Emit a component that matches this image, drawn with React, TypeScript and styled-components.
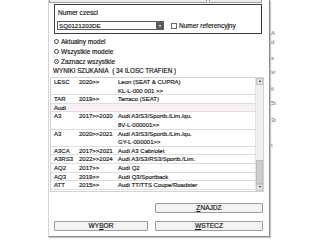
import styled, { createGlobalStyle } from 'styled-components'

const GlobalStyle = createGlobalStyle`
  html, body {
    margin: 0;
    padding: 0;
    background: #ffffff;
  }
  body {
    font-family: "Liberation Sans", Arial, sans-serif;
    color: #111111;
    -webkit-text-stroke: 0.15px #111111;
  }
`

const Page = styled.div`
  display: flex;
  align-items: flex-start;
  width: 320px;
  height: 240px;
  overflow: hidden;
  padding-left: 48px;
  box-sizing: border-box;
`

const Dialog = styled.div`
  display: flex;
  flex-direction: column;
  width: 222px;
  height: 237px;
  box-sizing: border-box;
  background: #ffffff;
  border-left: 1px solid #d4d4d4;
  border-right: 1px solid #8c8c8c;
  border-bottom: 1px solid #8c8c8c;
  box-shadow: 1px 1px 1px rgba(0, 0, 0, 0.22);
`

const TopFields = styled.div`
  display: flex;
  gap: 2px;
  height: 3px;
`

const FieldStub = styled.div<{ $w: number }>`
  width: ${(p) => p.$w}px;
  box-sizing: border-box;
  background: #ededed;
  border: 1px solid #a0a0a0;
  border-top: 0;
`

const GroupBox = styled.div`
  margin: 1px 0 0 5px;
  width: 208px;
  height: 30px;
  box-sizing: border-box;
  border: 1px solid #3c3c3c;
  padding: 4px 2px 0 2px;
`

const FieldLabel = styled.div`
  font-size: 6.6px;
  line-height: 8px;
  height: 8px;
  padding-left: 1px;
`

const FieldRow = styled.div`
  display: flex;
  align-items: center;
  margin-top: 4px;
  height: 9px;
`

const Combo = styled.div`
  display: flex;
  width: 107px;
  height: 9px;
  box-sizing: border-box;
  border: 1px solid #5a5a5a;
`

const ComboText = styled.div`
  flex: 1;
  font-size: 6.2px;
  line-height: 7px;
  padding-left: 1px;
`

const ComboArrow = styled.div`
  width: 7px;
  background: #5e5e5e;
  display: flex;
  align-items: center;
  justify-content: center;

  &::after {
    content: '';
    border-left: 1.5px solid transparent;
    border-right: 1.5px solid transparent;
    border-top: 2px solid #ffffff;
  }
`

const CheckBox = styled.div`
  width: 6px;
  height: 6px;
  box-sizing: border-box;
  border: 1px solid #6a6a6a;
  margin-left: 7px;
`

const CheckLabel = styled.span`
  font-size: 6.5px;
  margin-left: 2px;
`

const RadioList = styled.div`
  display: flex;
  flex-direction: column;
  margin: 3px 0 0 5px;
`

const RadioRow = styled.div`
  display: flex;
  align-items: center;
  height: 9.8px;
  font-size: 6.5px;
`

const RadioDot = styled.span<{ $checked?: boolean }>`
  display: flex;
  align-items: center;
  justify-content: center;
  width: 5px;
  height: 5px;
  box-sizing: border-box;
  border: 1px solid #444444;
  border-radius: 50%;
  margin-right: 2px;

  &::after {
    content: '';
    width: 1.6px;
    height: 1.6px;
    border-radius: 50%;
    background: ${(p) => (p.$checked ? '#222222' : 'transparent')};
  }
`

const ResultsTitle = styled.div`
  margin: 1px 0 0 4px;
  font-size: 6.3px;
  line-height: 8.6px;
`

const ResultsBox = styled.div`
  display: flex;
  margin: 1px 0 0 1px;
  width: 214px;
  height: 115px;
  box-sizing: border-box;
  border: 1px solid #d2d2d2;
  overflow: hidden;
`

const Rows = styled.div`
  flex: 1;
  display: flex;
  flex-direction: column;
`

const Row = styled.div<{ $group?: boolean }>`
  display: grid;
  grid-template-columns: 25px 39px 1fr;
  padding-left: 3px;
  font-size: 6px;
  line-height: 8.6px;
  background: ${(p) => (p.$group ? '#f8f0f5' : 'transparent')};
  box-shadow: inset 0 -1px 0 #dedede;
  flex-shrink: 0;
`

const Cell = styled.div`
  white-space: nowrap;
`

const Scrollbar = styled.div`
  display: flex;
  flex-direction: column;
  width: 7px;
  background: #efefef;
  border-left: 1px solid #e2e2e2;
`

const ScrollArrow = styled.div<{ $down?: boolean }>`
  height: 7px;
  display: flex;
  align-items: center;
  justify-content: center;
  background: #e4e4e4;
  border: 1px solid #c4c4c4;
  box-sizing: border-box;

  &::after {
    content: '';
    border-left: 1.5px solid transparent;
    border-right: 1.5px solid transparent;
    ${(p) => (p.$down ? 'border-top: 2px solid #222;' : 'border-bottom: 2px solid #222;')}
  }
`

const ScrollTrack = styled.div`
  flex: 1;
`

const ScrollThumb = styled.div`
  height: 24px;
  background: #cdcdcd;
  border: 1px solid #bdbdbd;
  box-sizing: border-box;
`

const Buttons = styled.div`
  display: grid;
  grid-template-columns: 94px 108px;
  grid-template-rows: 10px 10px;
  column-gap: 7px;
  row-gap: 8px;
  margin: 11px 0 0 5px;
`

const DlgButton = styled.div<{ $col: number }>`
  grid-column: ${(p) => p.$col};
  display: flex;
  align-items: center;
  justify-content: center;
  background: #f3f3f3;
  border: 1px solid #9c9c9c;
  border-radius: 1px;
  font-size: 6.6px;

  u {
    text-decoration-thickness: 0.6px;
    text-underline-offset: 0.8px;
  }
`

const BehindWindow = styled.div`
  display: flex;
  flex-direction: column;
  width: 5px;
  margin-left: 1px;
  overflow: hidden;
`

const Fragment = styled.div<{ $gap: number }>`
  margin-top: ${(p) => p.$gap}px;
  font-size: 6px;
  line-height: 6px;
  white-space: nowrap;
  color: #555555;
  -webkit-text-stroke: 0;
  -webkit-font-smoothing: antialiased;
  opacity: 0.85;
`

type ResultRow = { code?: string; years?: string; lines: string[]; group?: boolean }

const results: ResultRow[] = [
  { code: 'LESC', years: '2020>>', lines: ['Leon (SEAT & CUPRA)', 'KL-L-000 001 >>'] },
  { code: 'TAR', years: '2019>>', lines: ['Tarraco (SEAT)'] },
  { group: true, lines: [] },
  { code: 'A3', years: '2017>>2020', lines: ['Audi A3/S3/Sportb./Lim./qu.', '8V-L-000001>>'] },
  { code: 'A3', years: '2020>>2021', lines: ['Audi A3/S3/Sportb./Lim./qu.', 'GY-L-000001>>'] },
  { code: 'A3CA', years: '2017>>2021', lines: ['Audi A3 Cabriolet'] },
  { code: 'A3RS3', years: '2022>>2024', lines: ['Audi A3/S3/RS3/Sportb./Lim.'] },
  { code: 'AQ2', years: '2017>>', lines: ['Audi Q2'] },
  { code: 'AQ3', years: '2019>>', lines: ['Audi Q3/Sportback'] },
  { code: 'ATT', years: '2015>>', lines: ['Audi TT/TTS Coupe/Roadster'] },
]

const fragments = [
  { gap: 30, text: 'A' },
  { gap: 3, text: 'd' },
  { gap: 10, text: 's' },
  { gap: 8, text: 'si' },
  { gap: 11, text: 'fi' },
  { gap: 8, text: '5t' },
  { gap: 11, text: '3t' },
  { gap: 19, text: 't' },
]

function App() {
  return (
    <>
      <GlobalStyle />
      <Page>
        <Dialog>
          <TopFields>
            <FieldStub $w={158} />
            <FieldStub $w={53} />
          </TopFields>

          <GroupBox>
            <FieldLabel>Numer czesci</FieldLabel>
            <FieldRow>
              <Combo>
                <ComboText>SQ0121203DE</ComboText>
                <ComboArrow />
              </Combo>
              <CheckBox />
              <CheckLabel>Numer referencyjny</CheckLabel>
            </FieldRow>
          </GroupBox>

          <RadioList>
            <RadioRow>
              <RadioDot />
              Aktualny model
            </RadioRow>
            <RadioRow>
              <RadioDot />
              Wszystkie modele
            </RadioRow>
            <RadioRow>
              <RadioDot $checked />
              Zaznacz wszystkie
            </RadioRow>
          </RadioList>

          <ResultsTitle>WYNIKI SZUKANIA&nbsp; ( 34 ILOSC TRAFIEN )</ResultsTitle>

          <ResultsBox>
            <Rows>
              {results.map((r, i) =>
                r.group ? (
                  <Row key={i} $group>
                    <Cell>Audi</Cell>
                    <Cell />
                    <Cell />
                  </Row>
                ) : (
                  <Row key={i}>
                    <Cell>{r.code}</Cell>
                    <Cell>{r.years}</Cell>
                    <Cell>
                      {r.lines.map((l) => (
                        <div key={l}>{l}</div>
                      ))}
                    </Cell>
                  </Row>
                )
              )}
            </Rows>
            <Scrollbar>
              <ScrollArrow />
              <ScrollTrack />
              <ScrollThumb />
              <ScrollArrow $down />
            </Scrollbar>
          </ResultsBox>

          <Buttons>
            <DlgButton $col={2}>
              <span>
                <u>Z</u>NAJDZ
              </span>
            </DlgButton>
            <DlgButton $col={1}>
              <span>
                WY<u>B</u>OR
              </span>
            </DlgButton>
            <DlgButton $col={2}>
              <span>
                <u>W</u>STECZ
              </span>
            </DlgButton>
          </Buttons>
        </Dialog>

        <BehindWindow>
          {fragments.map((f, i) => (
            <Fragment key={i} $gap={f.gap}>
              {f.text}
            </Fragment>
          ))}
        </BehindWindow>
      </Page>
    </>
  )
}

export default App
